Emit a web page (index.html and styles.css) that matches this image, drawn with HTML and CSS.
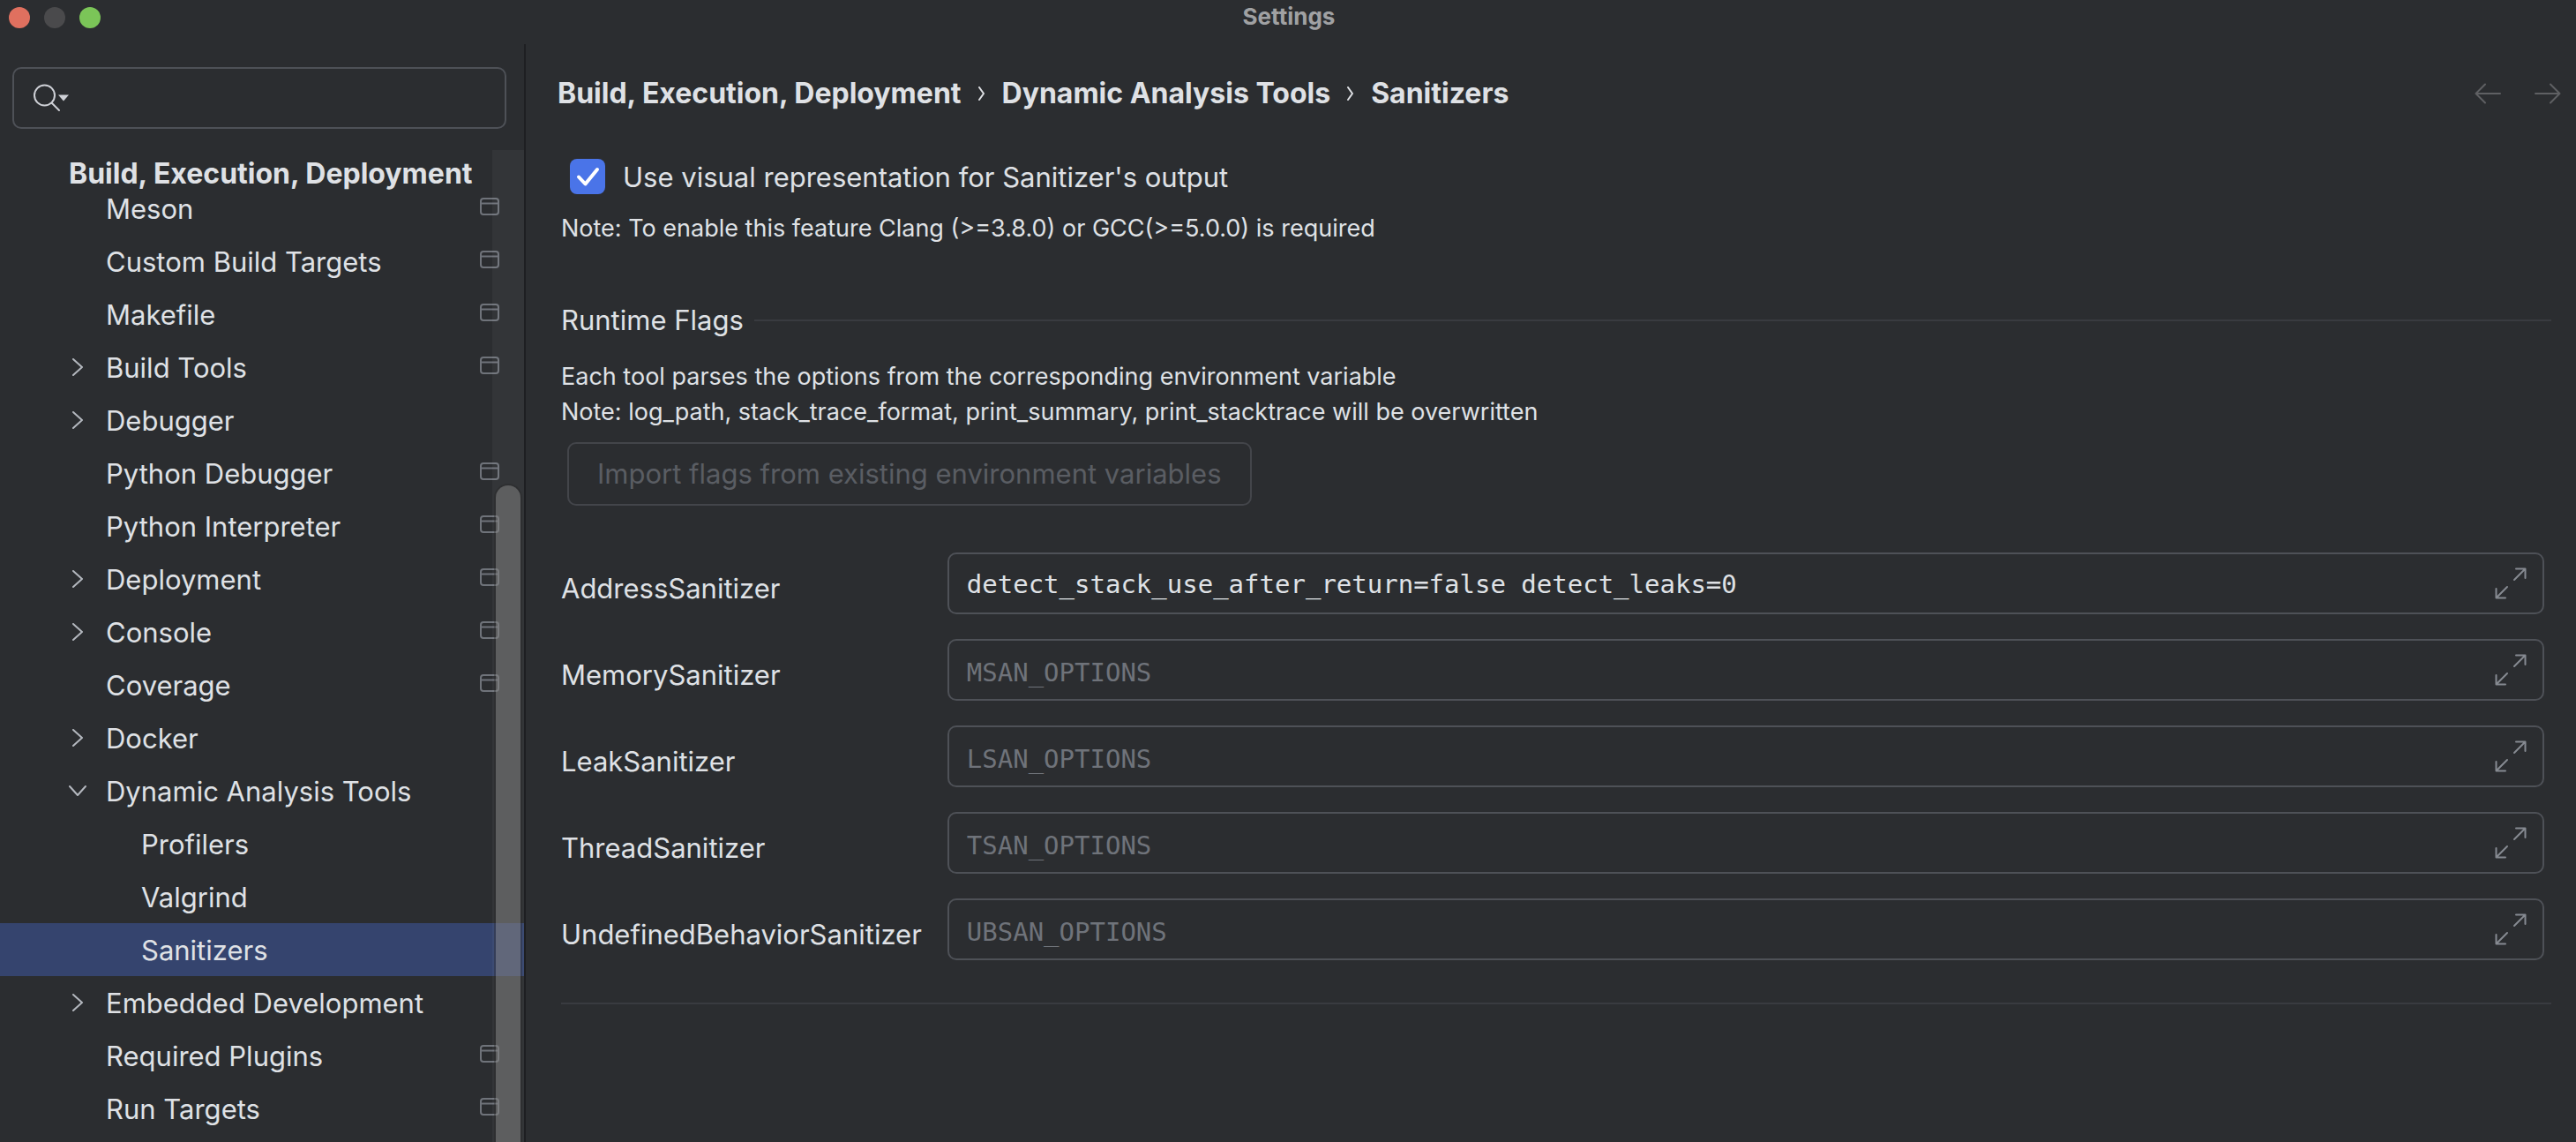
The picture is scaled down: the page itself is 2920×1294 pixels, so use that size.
FILE: index.html
```html
<!DOCTYPE html>
<html lang="en">
<head>
<meta charset="utf-8">
<title>Settings</title>
<link rel="stylesheet" href="styles.css">
</head>
<body>
<svg class="sprite" aria-hidden="true">
  <symbol id="project" viewBox="0 0 22 20"><rect x="1" y="1" width="20" height="18" rx="3"/><path d="M1 6.500H21"/></symbol>
  <symbol id="right" viewBox="0 0 20 20"><path d="M5 1L15 10L5 19"/></symbol>
  <symbol id="down" viewBox="0 0 20 20"><path d="M1 5L10 15L19 5"/></symbol>
  <symbol id="expand" viewBox="0 0 36 36"><path d="M24 1.500H34.500V12M34 2L22 14M1.500 24V34.500H12M2 34L14 22"/></symbol>
</svg>

<header class="titlebar">
  <div class="lights"><span class="light close"></span><span class="light minimize"></span><span class="light zoom"></span></div>
  <h1 class="window-title">Settings</h1>
</header>

<div class="window">
  <aside class="sidebar">
    <label class="search">
      <svg class="search-icon" viewBox="0 0 42 32" aria-hidden="true"><circle cx="12.500" cy="13" r="11.500"/><path d="M20.500 21.500L29 30"/><path class="fill" d="M28 12.500H40L34 19.500Z"/></svg>
      <input class="search-input" type="text" aria-label="Search settings">
    </label>
    <nav class="tree-area" aria-label="Settings categories">
      <h2 class="group">Build, Execution, Deployment</h2>
      <ul class="tree">
        <li><a class="node" href="#"><span class="arrow"></span><span class="name">Meson</span><svg class="project"><use href="#project"/></svg></a></li>
        <li><a class="node" href="#"><span class="arrow"></span><span class="name">Custom Build Targets</span><svg class="project"><use href="#project"/></svg></a></li>
        <li><a class="node" href="#"><span class="arrow"></span><span class="name">Makefile</span><svg class="project"><use href="#project"/></svg></a></li>
        <li><a class="node" href="#"><svg class="arrow"><use href="#right"/></svg><span class="name">Build Tools</span><svg class="project"><use href="#project"/></svg></a></li>
        <li><a class="node" href="#"><svg class="arrow"><use href="#right"/></svg><span class="name">Debugger</span></a></li>
        <li><a class="node" href="#"><span class="arrow"></span><span class="name">Python Debugger</span><svg class="project"><use href="#project"/></svg></a></li>
        <li><a class="node" href="#"><span class="arrow"></span><span class="name">Python Interpreter</span><svg class="project"><use href="#project"/></svg></a></li>
        <li><a class="node" href="#"><svg class="arrow"><use href="#right"/></svg><span class="name">Deployment</span><svg class="project"><use href="#project"/></svg></a></li>
        <li><a class="node" href="#"><svg class="arrow"><use href="#right"/></svg><span class="name">Console</span><svg class="project"><use href="#project"/></svg></a></li>
        <li><a class="node" href="#"><span class="arrow"></span><span class="name">Coverage</span><svg class="project"><use href="#project"/></svg></a></li>
        <li><a class="node" href="#"><svg class="arrow"><use href="#right"/></svg><span class="name">Docker</span></a></li>
        <li><a class="node" href="#"><svg class="arrow"><use href="#down"/></svg><span class="name">Dynamic Analysis Tools</span></a>
          <ul class="children">
            <li><a class="node" href="#"><span class="name">Profilers</span></a></li>
            <li><a class="node" href="#"><span class="name">Valgrind</span></a></li>
            <li><a class="node selected" href="#" aria-current="page"><span class="name">Sanitizers</span></a></li>
          </ul>
        </li>
        <li><a class="node" href="#"><svg class="arrow"><use href="#right"/></svg><span class="name">Embedded Development</span></a></li>
        <li><a class="node" href="#"><span class="arrow"></span><span class="name">Required Plugins</span><svg class="project"><use href="#project"/></svg></a></li>
        <li><a class="node" href="#"><span class="arrow"></span><span class="name">Run Targets</span><svg class="project"><use href="#project"/></svg></a></li>
      </ul>
      <div class="scrollbar"><div class="thumb"></div></div>
    </nav>
  </aside>

  <main class="content">
    <div class="topline">
      <nav class="crumbs" aria-label="Breadcrumb">
        <a href="#">Build, Execution, Deployment</a>
        <svg class="sep" viewBox="0 0 8 16"><path d="M1 1L6 8L1 15"/></svg>
        <a href="#">Dynamic Analysis Tools</a>
        <svg class="sep" viewBox="0 0 8 16"><path d="M1 1L6 8L1 15"/></svg>
        <a href="#" aria-current="page">Sanitizers</a>
      </nav>
      <div class="history">
        <button class="step" type="button" aria-label="Back" disabled><svg viewBox="0 0 30 24"><path d="M29 12H1.500M12 1.500L1.500 12L12 22.500"/></svg></button>
        <button class="step" type="button" aria-label="Forward" disabled><svg viewBox="0 0 30 24"><path d="M1 12H28.500M18 1.500L28.500 12L18 22.500"/></svg></button>
      </div>
    </div>

    <form class="form">
      <label class="check">
        <input class="check-input" type="checkbox" checked>
        <svg class="tick" viewBox="0 0 40 40" aria-hidden="true"><path d="M10 20.500L17.500 28.500L31 12"/></svg>
        <span class="check-text">Use visual representation for Sanitizer's output</span>
      </label>
      <p class="note">Note: To enable this feature Clang (&gt;=3.8.0) or GCC(&gt;=5.0.0) is required</p>

      <h2 class="section">Runtime Flags</h2>
      <p class="note">Each tool parses the options from the corresponding environment variable<br>Note: log_path, stack_trace_format, print_summary, print_stacktrace will be overwritten</p>
      <button class="import" type="button" disabled>Import flags from existing environment variables</button>

      <div class="fields">
        <label for="asan">AddressSanitizer</label>
        <div class="field"><input id="asan" type="text" value="detect_stack_use_after_return=false detect_leaks=0" placeholder="ASAN_OPTIONS"><button class="expand" type="button" aria-label="Expand"><svg><use href="#expand"/></svg></button></div>
        <label for="msan">MemorySanitizer</label>
        <div class="field"><input id="msan" type="text" placeholder="MSAN_OPTIONS"><button class="expand" type="button" aria-label="Expand"><svg><use href="#expand"/></svg></button></div>
        <label for="lsan">LeakSanitizer</label>
        <div class="field"><input id="lsan" type="text" placeholder="LSAN_OPTIONS"><button class="expand" type="button" aria-label="Expand"><svg><use href="#expand"/></svg></button></div>
        <label for="tsan">ThreadSanitizer</label>
        <div class="field"><input id="tsan" type="text" placeholder="TSAN_OPTIONS"><button class="expand" type="button" aria-label="Expand"><svg><use href="#expand"/></svg></button></div>
        <label for="ubsan">UndefinedBehaviorSanitizer</label>
        <div class="field"><input id="ubsan" type="text" placeholder="UBSAN_OPTIONS"><button class="expand" type="button" aria-label="Expand"><svg><use href="#expand"/></svg></button></div>
      </div>
      <hr class="rule">
    </form>
  </main>
</div>
</body>
</html>
```
FILE: styles.css
```css
:root {
  --bg: #2b2d30;
  --text: #dfe1e5;
  --line: #393b40;
  --border: #4e5157;
  --muted: #6f737a;
}

* {
  box-sizing: border-box;
}

body {
  margin: 0;
  height: 100vh;
  overflow: hidden;
  display: flex;
  flex-direction: column;
  background: var(--bg);
  color: var(--text);
  font: 31px/40px Inter, "Liberation Sans", sans-serif;
}

h1, h2, p, ul {
  margin: 0;
  padding: 0;
}

ul {
  list-style: none;
}

a {
  color: inherit;
  text-decoration: none;
}

button, input {
  font: inherit;
  color: inherit;
}

svg {
  fill: none;
  stroke: currentColor;
  stroke-width: 2;
  stroke-linecap: round;
  stroke-linejoin: round;
}

.sprite {
  display: none;
}

/* Title bar */
.titlebar {
  display: grid;
  grid-template-columns: 1fr auto 1fr;
  align-items: center;
  height: 40px;
  margin-bottom: 10px;
  padding: 0 10px;
}

.lights {
  display: flex;
  gap: 16px;
}

.light {
  width: 24px;
  height: 24px;
  border-radius: 50%;
}

.close { background: #e0705f; }
.minimize { background: #4a4a4c; }
.zoom { background: #7bc558; }

.window-title {
  color: #a0a1a3;
  font-size: 26px;
  line-height: 38px;
  padding: 0 0 2px 2px;
  font-weight: 700;
}

.window {
  flex: 1;
  min-height: 0;
  display: flex;
}

/* Sidebar */
.sidebar {
  flex: none;
  width: 596px;
  display: flex;
  flex-direction: column;
  border-right: 2px solid #1e1f22;
}

.search {
  display: flex;
  align-items: center;
  gap: 8px;
  height: 70px;
  margin: 26px 20px 24px 14px;
  padding: 0 22px;
  border: 2px solid var(--border);
  border-radius: 10px;
}

.search-icon {
  flex: none;
  width: 42px;
  height: 32px;
  color: #ced0d6;
}

.search-icon .fill {
  fill: currentColor;
  stroke: none;
}

.search-input {
  flex: 1;
  min-width: 0;
  border: 0;
  outline: 0;
  background: none;
}

.tree-area {
  position: relative;
  flex: 1;
  min-height: 0;
  overflow: hidden;
}

.group {
  height: 36px;
  padding: 8px 0 0 78px;
  font-size: 32px;
  line-height: 38px;
  font-weight: 700;
}

.node {
  display: flex;
  align-items: center;
  gap: 22px;
  height: 60px;
  padding: 0 28px 0 78px;
}

.children .node {
  padding-left: 160px;
}

.selected {
  background: #35446e;
}

.arrow {
  flex: none;
  width: 20px;
  height: 20px;
  color: #b4b8bf;
}

.name {
  flex: 1;
  padding-top: 2px;
}

.project {
  flex: none;
  width: 22px;
  height: 20px;
  margin-bottom: 4px;
  color: var(--muted);
}

.scrollbar {
  position: absolute;
  inset: 0 0 0 auto;
  width: 36px;
  padding-top: 380px;
  background: rgba(255, 255, 255, 0.04);
}

.thumb {
  height: 100%;
  margin: 0 4px;
  border-radius: 14px 14px 0 0;
  background: rgba(128, 128, 128, 0.55);
  box-shadow: 0 0 0 2px rgba(38, 38, 38, 0.35);
}

/* Content */
.content {
  flex: 1;
  min-width: 0;
  padding: 36px 14px 0 36px;
}

.topline {
  display: flex;
  justify-content: space-between;
  align-items: center;
}

.crumbs {
  display: flex;
  align-items: center;
  gap: 19px;
  font-size: 32px;
  font-weight: 700;
}

.sep {
  width: 8px;
  height: 16px;
}

.history {
  display: flex;
  gap: 38px;
  padding-right: 3px;
}

.step {
  display: flex;
  padding: 0;
  border: 0;
  background: none;
  color: #5f6063;
}

.step svg {
  width: 30px;
  height: 24px;
}

.form {
  padding: 0 14px 0 4px;
}

.check {
  position: relative;
  display: flex;
  align-items: center;
  gap: 20px;
  height: 40px;
  margin: 54px 0 19px 10px;
}

.check-text {
  padding-top: 2px;
}

.check-input {
  appearance: none;
  width: 40px;
  height: 40px;
  margin: 0;
  border-radius: 8px;
  background: #4a74e8;
}

.tick {
  position: absolute;
  left: 0;
  width: 40px;
  height: 40px;
  color: #fff;
  stroke-width: 4;
}

.note {
  font-size: 27px;
}

.section {
  display: flex;
  align-items: center;
  gap: 12px;
  margin: 64px 0 24px;
  font-size: 31px;
  font-weight: 400;
}

.section::after {
  content: "";
  flex: 1;
  height: 2px;
  background: var(--line);
}

.import {
  height: 72px;
  margin: 14px 0 0 7px;
  padding: 0 32px;
  border: 2px solid #43454a;
  border-radius: 10px;
  background: none;
  color: #5a5d63;
}

.fields {
  display: grid;
  grid-template-columns: auto 1fr;
  align-items: center;
  gap: 28px 29px;
  margin: 53px 8px 0 0;
}

.fields label {
  padding-top: 12px;
}

.field {
  display: flex;
  align-items: center;
  height: 70px;
  padding: 0 18px 0 20px;
  border: 2px solid var(--border);
  border-radius: 10px;
}

.field input {
  flex: 1;
  min-width: 0;
  padding: 2px 0 0;
  border: 0;
  outline: 0;
  background: none;
  font: 29px/40px "DejaVu Sans Mono", monospace;
}

.field input:placeholder-shown {
  padding-top: 6px;
}

.field input::placeholder {
  color: var(--muted);
  opacity: 1;
}

.expand {
  display: flex;
  padding: 0;
  border: 0;
  background: none;
  color: #868a91;
}

.expand svg {
  width: 36px;
  height: 36px;
}

.rule {
  height: 2px;
  margin: 48px 0 0;
  border: 0;
  background: var(--line);
}
```
